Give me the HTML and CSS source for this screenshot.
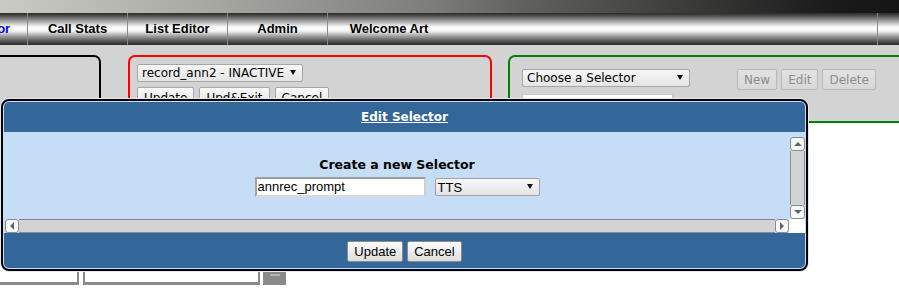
FILE: index.html
```html
<!DOCTYPE html>
<html>
<head>
<meta charset="utf-8">
<title>Edit Selector</title>
<link rel="stylesheet" href="styles.css">
</head>
<body>
<div class="topstrip"></div>
<nav class="nav">
  <div class="tab tab-first"><span class="cur">Selector</span></div>
  <div class="tab">Call Stats</div>
  <div class="tab">List Editor</div>
  <div class="tab">Admin</div>
  <div class="tab tab-wide">Welcome Art</div>
  <div class="tab-spacer"></div>
  <div class="tab tab-last"></div>
</nav>

<div class="workarea">
  <div class="panel panel-black"></div>
  <div class="panel panel-red">
    <div class="select sel-rec"><span>record_ann2 - INACTIVE</span><i class="caret"></i></div>
    <div class="btnrow">
      <button class="btn">Update</button>
      <button class="btn">Upd&amp;Exit</button>
      <button class="btn">Cancel</button>
    </div>
  </div>
  <div class="panel panel-green">
    <div class="selcol">
      <div class="select sel-choose"><span>Choose a Selector</span><i class="caret"></i></div>
      <div class="plainbox"></div>
    </div>
    <div class="btnrow btnrow-green">
      <button class="btn" disabled>New</button>
      <button class="btn" disabled>Edit</button>
      <button class="btn" disabled>Delete</button>
    </div>
  </div>
</div>

<div class="lower">
  <div class="lbox lbox1"></div>
  <div class="lbox lbox2"></div>
  <div class="lblock"><i></i></div>
</div>

<div class="dialog">
  <div class="dlg-head"><a class="dlg-title">Edit Selector</a></div>
  <div class="dlg-body">
    <div class="pane">
      <div class="pane-content">
        <h2 class="pane-heading">Create a new Selector</h2>
        <div class="pane-row">
          <div class="textin">annrec_prompt</div>
          <div class="select sel-tts"><span>TTS</span><i class="caret"></i></div>
        </div>
      </div>
      <div class="vscroll">
        <div class="sb-btn sb-v"><i class="tri tri-up"></i></div>
        <div class="sb-track-v"></div>
        <div class="sb-btn sb-v"><i class="tri tri-down"></i></div>
      </div>
      <div class="hscroll">
        <div class="sb-btn sb-h"><i class="tri tri-left"></i></div>
        <div class="sb-track-h"></div>
        <div class="sb-btn sb-h"><i class="tri tri-right"></i></div>
      </div>
      <div class="sb-corner"></div>
    </div>
  </div>
  <div class="dlg-foot">
    <button class="fbtn">Update</button>
    <button class="fbtn">Cancel</button>
  </div>
</div>
</body>
</html>
```

FILE: styles.css
```css
html, body {
  margin: 0;
  padding: 0;
}
body {
  width: 899px;
  height: 298px;
  overflow: hidden;
  background: #fff;
  position: relative;
  font-family: "DejaVu Sans", sans-serif;
  font-size: 12px;
  color: #000;
}

/* top strip */
.topstrip {
  height: 13px;
  background: linear-gradient(to right, #cbcbc5 0%, #a9aaa4 22%, #7d7e79 48%, #61625d 58%, #3c3c3a 76%, #1b1b1b 92%, #151515 100%);
}

/* nav */
.nav {
  display: flex;
  height: 32px;
  margin-left: -58px;
  background: linear-gradient(to bottom, #2b2b2b 0%, #3d3d3d 5%, #777 17%, #c4c4c4 32%, #f4f4f4 42%, #fff 50%, #ececec 58%, #b5b5b5 68%, #7a7a7a 80%, #444 92%, #2b2b2b 100%);
  font: bold 13px "Liberation Sans", Arial, sans-serif;
}
.tab {
  box-sizing: border-box;
  width: 100px;
  flex: none;
  border-left: 1px solid #8a8a8a;
  text-align: center;
  line-height: 32px;
  color: #000;
  white-space: nowrap;
}
.tab-first {
  width: 85px;
  border-left: none;
}
.cur { color: #0000ff; }
.tab-wide {
  width: 123px;
  border-left: 1px solid #8a8a8a;
}
.tab-spacer { flex: none; width: 427px; }
.tab-last { width: 60px; }

/* work area */
.workarea {
  display: flex;
  align-items: flex-start;
  height: 78px;
  box-sizing: border-box;
  padding-top: 10px;
  background: #d3d3d3;
}
.panel {
  box-sizing: border-box;
  flex: none;
  border: 2px solid #000;
  border-radius: 7px;
  background: #d3d3d3;
}
.panel-black {
  width: 162px;
  height: 170px;
  margin-left: -61px;
}
.panel-red {
  width: 364px;
  height: 170px;
  margin-left: 27px;
  border-color: #ff0000;
  padding: 7px 0 0 7px;
}
.panel-green {
  width: 420px;
  height: 68px;
  margin-left: 16px;
  border-color: #008000;
  padding: 12px 0 0 12px;
  display: flex;
  align-items: flex-start;
}

.select {
  box-sizing: border-box;
  display: flex;
  align-items: center;
  justify-content: space-between;
  height: 18px;
  border: 1px solid #a6a6a6;
  border-radius: 2px;
  background: linear-gradient(#f8f8f8, #e4e4e4);
  padding: 0 6px 0 4px;
  font-size: 12px;
  white-space: nowrap;
}
.caret {
  display: block;
  width: 0;
  height: 0;
  border-left: 3px solid transparent;
  border-right: 3px solid transparent;
  border-top: 5px solid #111;
  margin-bottom: 2px;
}
.sel-rec { width: 166px; }
.sel-choose { width: 168px; }

.btnrow {
  display: flex;
  gap: 5px;
  margin-top: 5px;
}
.btnrow-green {
  margin-top: 0;
  margin-left: 47px;
  gap: 4px;
}
.btn {
  height: 21px;
  padding: 0 6px;
  margin: 0;
  border: 1px solid #a6a6a6;
  border-radius: 2px;
  background: linear-gradient(#fafafa, #e0e0e0);
  font: 12px "DejaVu Sans", sans-serif;
  color: #000;
}
.btn:disabled {
  color: #8e8e8e;
  border-color: #b8b8b8;
  background: linear-gradient(#e2e2e2, #d8d8d8);
}
.selcol {
  display: flex;
  flex-direction: column;
  gap: 7px;
}
.plainbox {
  width: 151px;
  height: 22px;
  box-sizing: border-box;
  background: #fff;
  border: 1px solid #c8c8c8;
}

/* lower boxes */
.lower {
  display: flex;
  align-items: flex-end;
  margin-top: 130px;
}
.lbox {
  box-sizing: border-box;
  height: 32px;
  background: #fff;
  border: 2px solid #8a8a8a;
  border-bottom-width: 3px;
}
.lbox1 { width: 79px; border-left: none; }
.lbox2 { width: 177px; margin-left: 4px; }
.lblock {
  width: 23px;
  height: 13px;
  margin-left: 3px;
  margin-bottom: 0;
  background: #8a8a8a;
  display: flex;
  justify-content: center;
}
.lblock i {
  display: block;
  width: 10px;
  height: 2px;
  margin-top: 2px;
  background: #b4b4b4;
}

/* dialog overlay */
.dialog {
  position: absolute;
  left: 1px;
  top: 99px;
  width: 807px;
  box-sizing: border-box;
  border: 2px solid #000;
  border-radius: 8px;
  padding: 1px;
  background: #c6def5;
  box-shadow: 0 0 0 1px #dbeafa;
}
.dlg-head {
  height: 30px;
  background: #336699;
  border-radius: 5px 5px 0 0;
  text-align: center;
  line-height: 30px;
}
.dlg-title {
  color: #fff;
  font: bold 12px "DejaVu Sans", sans-serif;
  text-decoration: underline;
}
.dlg-body {
  background: #c6def5;
  padding: 5px 0 0 1px;
}
.pane {
  display: grid;
  grid-template-columns: 1fr 16px;
  grid-template-rows: 82px 14px;
}
.pane-content {
  padding-top: 20px;
  text-align: center;
}
.pane-heading {
  margin: 0 0 4px;
  font: bold 12.5px "DejaVu Sans", sans-serif;
  line-height: 16px;
}
.pane-row {
  display: flex;
  justify-content: center;
  align-items: center;
  gap: 9px;
}
.textin {
  box-sizing: border-box;
  width: 171px;
  height: 20px;
  border: 2px solid;
  border-color: #9c9c9c #cfcfcf #dadada #a4a4a4;
  background: #fff;
  padding-left: 1px;
  text-align: left;
  font: 13px "Liberation Sans", Arial, sans-serif;
  line-height: 16px;
}
.sel-tts {
  width: 105px;
  padding-left: 2px;
  font: 13px "Liberation Sans", Arial, sans-serif;
  border-color: #a0a0a0;
}

/* fake scrollbars */
.vscroll {
  grid-column: 2;
  grid-row: 1;
  display: flex;
  flex-direction: column;
  padding-left: 1px;
}
.hscroll {
  grid-column: 1;
  grid-row: 2;
  display: flex;
}
.sb-corner {
  grid-column: 2;
  grid-row: 2;
  background: #fff;
}
.sb-btn {
  box-sizing: border-box;
  flex: none;
  background: #f8f8f8;
  border: 1px solid #8c8c8c;
  border-radius: 3px;
  display: flex;
  align-items: center;
  justify-content: center;
}
.sb-v { height: 14px; }
.sb-h { width: 14px; }
.sb-track-v {
  flex: 1;
  background: #d3d3d3;
  border-left: 1px solid #8c8c8c;
  border-right: 1px solid #8c8c8c;
}
.sb-track-h {
  flex: 1;
  background: #d3d3d3;
  border-top: 1px solid #7d8791;
  border-bottom: 1px solid #8c8c8c;
}
.tri {
  display: block;
  width: 0;
  height: 0;
}
.tri-up {
  border-left: 4px solid transparent;
  border-right: 4px solid transparent;
  border-bottom: 4px solid #5c6670;
}
.tri-down {
  border-left: 4px solid transparent;
  border-right: 4px solid transparent;
  border-top: 4px solid #5c6670;
}
.tri-left {
  border-top: 4px solid transparent;
  border-bottom: 4px solid transparent;
  border-right: 4px solid #5c6670;
}
.tri-right {
  border-top: 4px solid transparent;
  border-bottom: 4px solid transparent;
  border-left: 4px solid #5c6670;
}

.dlg-foot {
  box-sizing: border-box;
  height: 35px;
  padding-top: 8px;
  background: #336699;
  border-radius: 0 0 5px 5px;
  display: flex;
  justify-content: center;
  align-items: flex-start;
  gap: 4px;
}
.fbtn {
  height: 21px;
  margin: 0;
  padding: 0 6px;
  border: 1px solid #8c8c8c;
  border-radius: 2px;
  background: linear-gradient(#fdfdfd, #dcdcdc);
  font: 13px "Liberation Sans", Arial, sans-serif;
  color: #000;
}
```
